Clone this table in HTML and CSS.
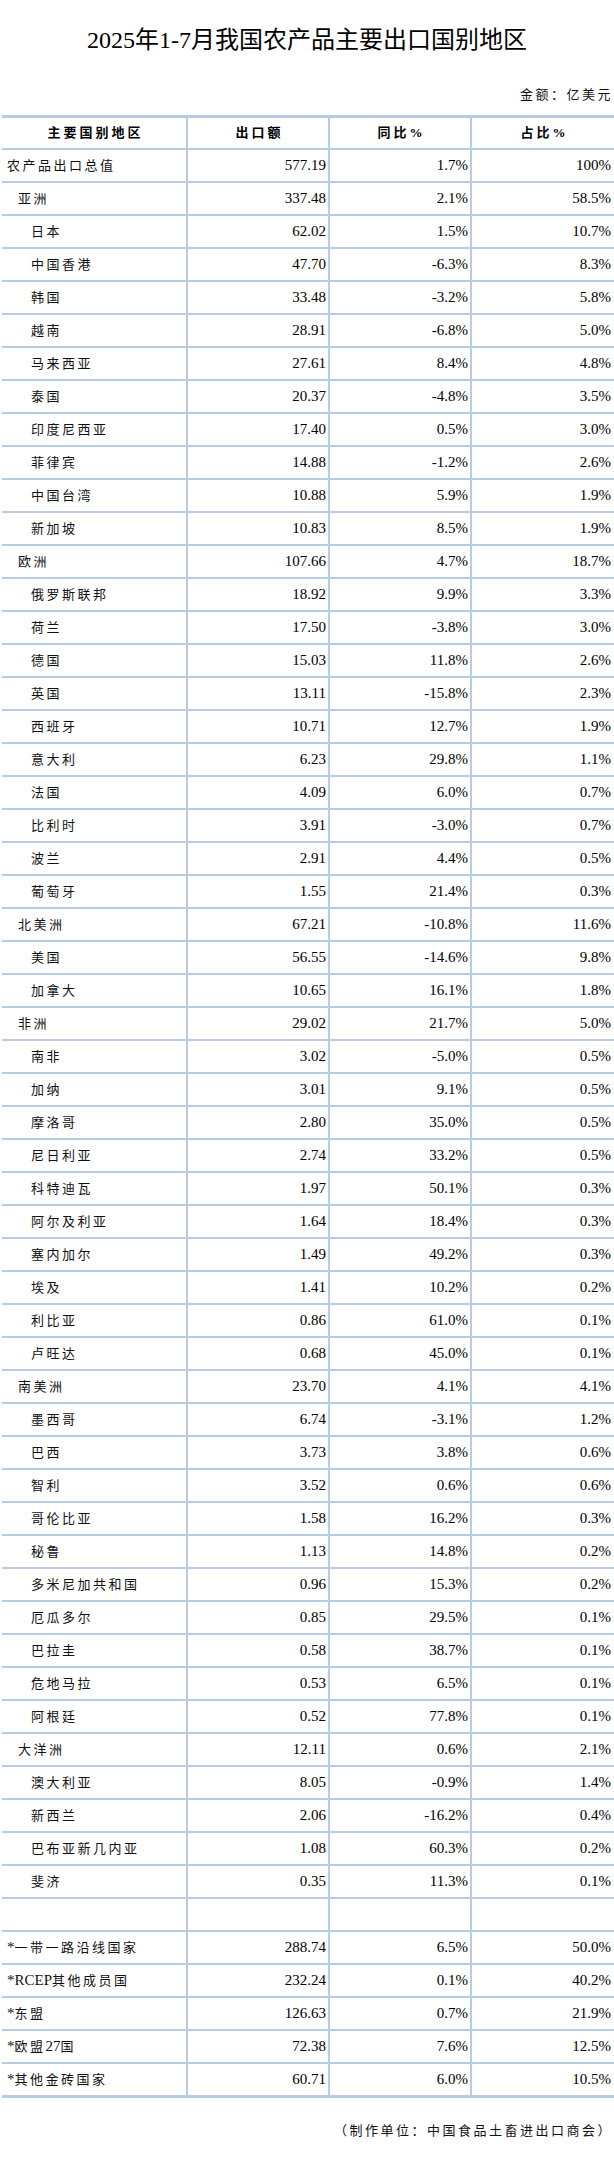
FILE: index.html
```html
<!DOCTYPE html>
<html lang="zh-CN">
<head>
<meta charset="utf-8">
<title>2025年1-7月我国农产品主要出口国别地区</title>
<link rel="stylesheet" href="styles.css">
</head>
<body>
<div class="page">
  <h1 class="title">2025年1-7月我国农产品主要出口国别地区</h1>
  <div class="unit">金额：亿美元</div>
  <table class="data">
    <colgroup>
      <col class="c1"><col class="c2"><col class="c3"><col class="c4">
    </colgroup>
    <thead>
      <tr><th>主要国别地区</th><th>出口额</th><th>同比%</th><th>占比%</th></tr>
    </thead>
    <tbody>
      <tr><td class="name l0">农产品出口总值</td><td class="num">577.19</td><td class="num">1.7%</td><td class="num last">100%</td></tr>
      <tr><td class="name l1">亚洲</td><td class="num">337.48</td><td class="num">2.1%</td><td class="num last">58.5%</td></tr>
      <tr><td class="name l2">日本</td><td class="num">62.02</td><td class="num">1.5%</td><td class="num last">10.7%</td></tr>
      <tr><td class="name l2">中国香港</td><td class="num">47.70</td><td class="num">-6.3%</td><td class="num last">8.3%</td></tr>
      <tr><td class="name l2">韩国</td><td class="num">33.48</td><td class="num">-3.2%</td><td class="num last">5.8%</td></tr>
      <tr><td class="name l2">越南</td><td class="num">28.91</td><td class="num">-6.8%</td><td class="num last">5.0%</td></tr>
      <tr><td class="name l2">马来西亚</td><td class="num">27.61</td><td class="num">8.4%</td><td class="num last">4.8%</td></tr>
      <tr><td class="name l2">泰国</td><td class="num">20.37</td><td class="num">-4.8%</td><td class="num last">3.5%</td></tr>
      <tr><td class="name l2">印度尼西亚</td><td class="num">17.40</td><td class="num">0.5%</td><td class="num last">3.0%</td></tr>
      <tr><td class="name l2">菲律宾</td><td class="num">14.88</td><td class="num">-1.2%</td><td class="num last">2.6%</td></tr>
      <tr><td class="name l2">中国台湾</td><td class="num">10.88</td><td class="num">5.9%</td><td class="num last">1.9%</td></tr>
      <tr><td class="name l2">新加坡</td><td class="num">10.83</td><td class="num">8.5%</td><td class="num last">1.9%</td></tr>
      <tr><td class="name l1">欧洲</td><td class="num">107.66</td><td class="num">4.7%</td><td class="num last">18.7%</td></tr>
      <tr><td class="name l2">俄罗斯联邦</td><td class="num">18.92</td><td class="num">9.9%</td><td class="num last">3.3%</td></tr>
      <tr><td class="name l2">荷兰</td><td class="num">17.50</td><td class="num">-3.8%</td><td class="num last">3.0%</td></tr>
      <tr><td class="name l2">德国</td><td class="num">15.03</td><td class="num">11.8%</td><td class="num last">2.6%</td></tr>
      <tr><td class="name l2">英国</td><td class="num">13.11</td><td class="num">-15.8%</td><td class="num last">2.3%</td></tr>
      <tr><td class="name l2">西班牙</td><td class="num">10.71</td><td class="num">12.7%</td><td class="num last">1.9%</td></tr>
      <tr><td class="name l2">意大利</td><td class="num">6.23</td><td class="num">29.8%</td><td class="num last">1.1%</td></tr>
      <tr><td class="name l2">法国</td><td class="num">4.09</td><td class="num">6.0%</td><td class="num last">0.7%</td></tr>
      <tr><td class="name l2">比利时</td><td class="num">3.91</td><td class="num">-3.0%</td><td class="num last">0.7%</td></tr>
      <tr><td class="name l2">波兰</td><td class="num">2.91</td><td class="num">4.4%</td><td class="num last">0.5%</td></tr>
      <tr><td class="name l2">葡萄牙</td><td class="num">1.55</td><td class="num">21.4%</td><td class="num last">0.3%</td></tr>
      <tr><td class="name l1">北美洲</td><td class="num">67.21</td><td class="num">-10.8%</td><td class="num last">11.6%</td></tr>
      <tr><td class="name l2">美国</td><td class="num">56.55</td><td class="num">-14.6%</td><td class="num last">9.8%</td></tr>
      <tr><td class="name l2">加拿大</td><td class="num">10.65</td><td class="num">16.1%</td><td class="num last">1.8%</td></tr>
      <tr><td class="name l1">非洲</td><td class="num">29.02</td><td class="num">21.7%</td><td class="num last">5.0%</td></tr>
      <tr><td class="name l2">南非</td><td class="num">3.02</td><td class="num">-5.0%</td><td class="num last">0.5%</td></tr>
      <tr><td class="name l2">加纳</td><td class="num">3.01</td><td class="num">9.1%</td><td class="num last">0.5%</td></tr>
      <tr><td class="name l2">摩洛哥</td><td class="num">2.80</td><td class="num">35.0%</td><td class="num last">0.5%</td></tr>
      <tr><td class="name l2">尼日利亚</td><td class="num">2.74</td><td class="num">33.2%</td><td class="num last">0.5%</td></tr>
      <tr><td class="name l2">科特迪瓦</td><td class="num">1.97</td><td class="num">50.1%</td><td class="num last">0.3%</td></tr>
      <tr><td class="name l2">阿尔及利亚</td><td class="num">1.64</td><td class="num">18.4%</td><td class="num last">0.3%</td></tr>
      <tr><td class="name l2">塞内加尔</td><td class="num">1.49</td><td class="num">49.2%</td><td class="num last">0.3%</td></tr>
      <tr><td class="name l2">埃及</td><td class="num">1.41</td><td class="num">10.2%</td><td class="num last">0.2%</td></tr>
      <tr><td class="name l2">利比亚</td><td class="num">0.86</td><td class="num">61.0%</td><td class="num last">0.1%</td></tr>
      <tr><td class="name l2">卢旺达</td><td class="num">0.68</td><td class="num">45.0%</td><td class="num last">0.1%</td></tr>
      <tr><td class="name l1">南美洲</td><td class="num">23.70</td><td class="num">4.1%</td><td class="num last">4.1%</td></tr>
      <tr><td class="name l2">墨西哥</td><td class="num">6.74</td><td class="num">-3.1%</td><td class="num last">1.2%</td></tr>
      <tr><td class="name l2">巴西</td><td class="num">3.73</td><td class="num">3.8%</td><td class="num last">0.6%</td></tr>
      <tr><td class="name l2">智利</td><td class="num">3.52</td><td class="num">0.6%</td><td class="num last">0.6%</td></tr>
      <tr><td class="name l2">哥伦比亚</td><td class="num">1.58</td><td class="num">16.2%</td><td class="num last">0.3%</td></tr>
      <tr><td class="name l2">秘鲁</td><td class="num">1.13</td><td class="num">14.8%</td><td class="num last">0.2%</td></tr>
      <tr><td class="name l2">多米尼加共和国</td><td class="num">0.96</td><td class="num">15.3%</td><td class="num last">0.2%</td></tr>
      <tr><td class="name l2">厄瓜多尔</td><td class="num">0.85</td><td class="num">29.5%</td><td class="num last">0.1%</td></tr>
      <tr><td class="name l2">巴拉圭</td><td class="num">0.58</td><td class="num">38.7%</td><td class="num last">0.1%</td></tr>
      <tr><td class="name l2">危地马拉</td><td class="num">0.53</td><td class="num">6.5%</td><td class="num last">0.1%</td></tr>
      <tr><td class="name l2">阿根廷</td><td class="num">0.52</td><td class="num">77.8%</td><td class="num last">0.1%</td></tr>
      <tr><td class="name l1">大洋洲</td><td class="num">12.11</td><td class="num">0.6%</td><td class="num last">2.1%</td></tr>
      <tr><td class="name l2">澳大利亚</td><td class="num">8.05</td><td class="num">-0.9%</td><td class="num last">1.4%</td></tr>
      <tr><td class="name l2">新西兰</td><td class="num">2.06</td><td class="num">-16.2%</td><td class="num last">0.4%</td></tr>
      <tr><td class="name l2">巴布亚新几内亚</td><td class="num">1.08</td><td class="num">60.3%</td><td class="num last">0.2%</td></tr>
      <tr><td class="name l2">斐济</td><td class="num">0.35</td><td class="num">11.3%</td><td class="num last">0.1%</td></tr>
      <tr><td class="name l0">&nbsp;</td><td class="num">&nbsp;</td><td class="num">&nbsp;</td><td class="num last">&nbsp;</td></tr>
      <tr><td class="name l0"><span class="lat">*</span>一带一路沿线国家</td><td class="num">288.74</td><td class="num">6.5%</td><td class="num last">50.0%</td></tr>
      <tr><td class="name l0"><span class="lat">*RCEP</span>其他成员国</td><td class="num">232.24</td><td class="num">0.1%</td><td class="num last">40.2%</td></tr>
      <tr><td class="name l0"><span class="lat">*</span>东盟</td><td class="num">126.63</td><td class="num">0.7%</td><td class="num last">21.9%</td></tr>
      <tr><td class="name l0"><span class="lat">*</span>欧盟<span class="lat">27</span>国</td><td class="num">72.38</td><td class="num">7.6%</td><td class="num last">12.5%</td></tr>
      <tr class="end"><td class="name l0"><span class="lat">*</span>其他金砖国家</td><td class="num">60.71</td><td class="num">6.0%</td><td class="num last">10.5%</td></tr>
    </tbody>
  </table>
  <div class="footer">（制作单位：中国食品土畜进出口商会）</div>
</div>
</body>
</html>
```

FILE: styles.css
```css
html, body {
  margin: 0;
  padding: 0;
  background: #ffffff;
}

body {
  width: 614px;
  overflow: hidden;
  font-family: "Liberation Serif", "Noto Sans CJK SC", serif;
  color: #000000;
}

.page {
  padding-top: 25px;
  padding-bottom: 20px;
}

.title {
  margin: 0;
  text-align: center;
  font-size: 24px;
  line-height: 30px;
  font-weight: normal;
  color: #000;
}

.unit {
  margin-top: 31px;
  padding-right: 1px;
  text-align: right;
  font-size: 13px;
  line-height: 18px;
  letter-spacing: 2.5px;
  color: #111;
}

.data {
  margin: 11px 0 0 2px;
  width: 614px;
  table-layout: fixed;
  border-collapse: separate;
  border-spacing: 0;
  border-top: 3px solid #b8cce4;
}

.c1 { width: 186px; }
.c2 { width: 142px; }
.c3 { width: 142px; }
.c4 { width: 144px; }

.data th,
.data td {
  box-sizing: border-box;
  padding: 0;
  border-right: 2px solid #b8cce4;
  border-bottom: 2px solid #b8cce4;
  white-space: nowrap;
  overflow: hidden;
}

.data th {
  height: 32px;
  line-height: 30px;
  font-size: 13px;
  font-weight: bold;
  letter-spacing: 3px;
  padding-left: 3px;
  text-align: center;
  color: #000;
}

.data td {
  height: 33px;
  line-height: 31px;
}

.data tr.end td {
  border-bottom-width: 3px;
}

.name {
  font-size: 13px;
  letter-spacing: 2.5px;
  text-align: left;
  color: #111;
}

.name .lat {
  font-size: 15px;
  letter-spacing: 0;
}

.l0 { padding-left: 5px !important; }
.l1 { padding-left: 16px !important; }
.l2 { padding-left: 29px !important; }

.num {
  font-size: 15px;
  text-align: right;
  padding-right: 2px !important;
  color: #000;
}

.num.last {
  padding-right: 3px !important;
}

.footer {
  margin-top: 24px;
  padding-right: 1px;
  text-align: right;
  font-size: 13px;
  line-height: 18px;
  letter-spacing: 2.5px;
  color: #111;
}
```
